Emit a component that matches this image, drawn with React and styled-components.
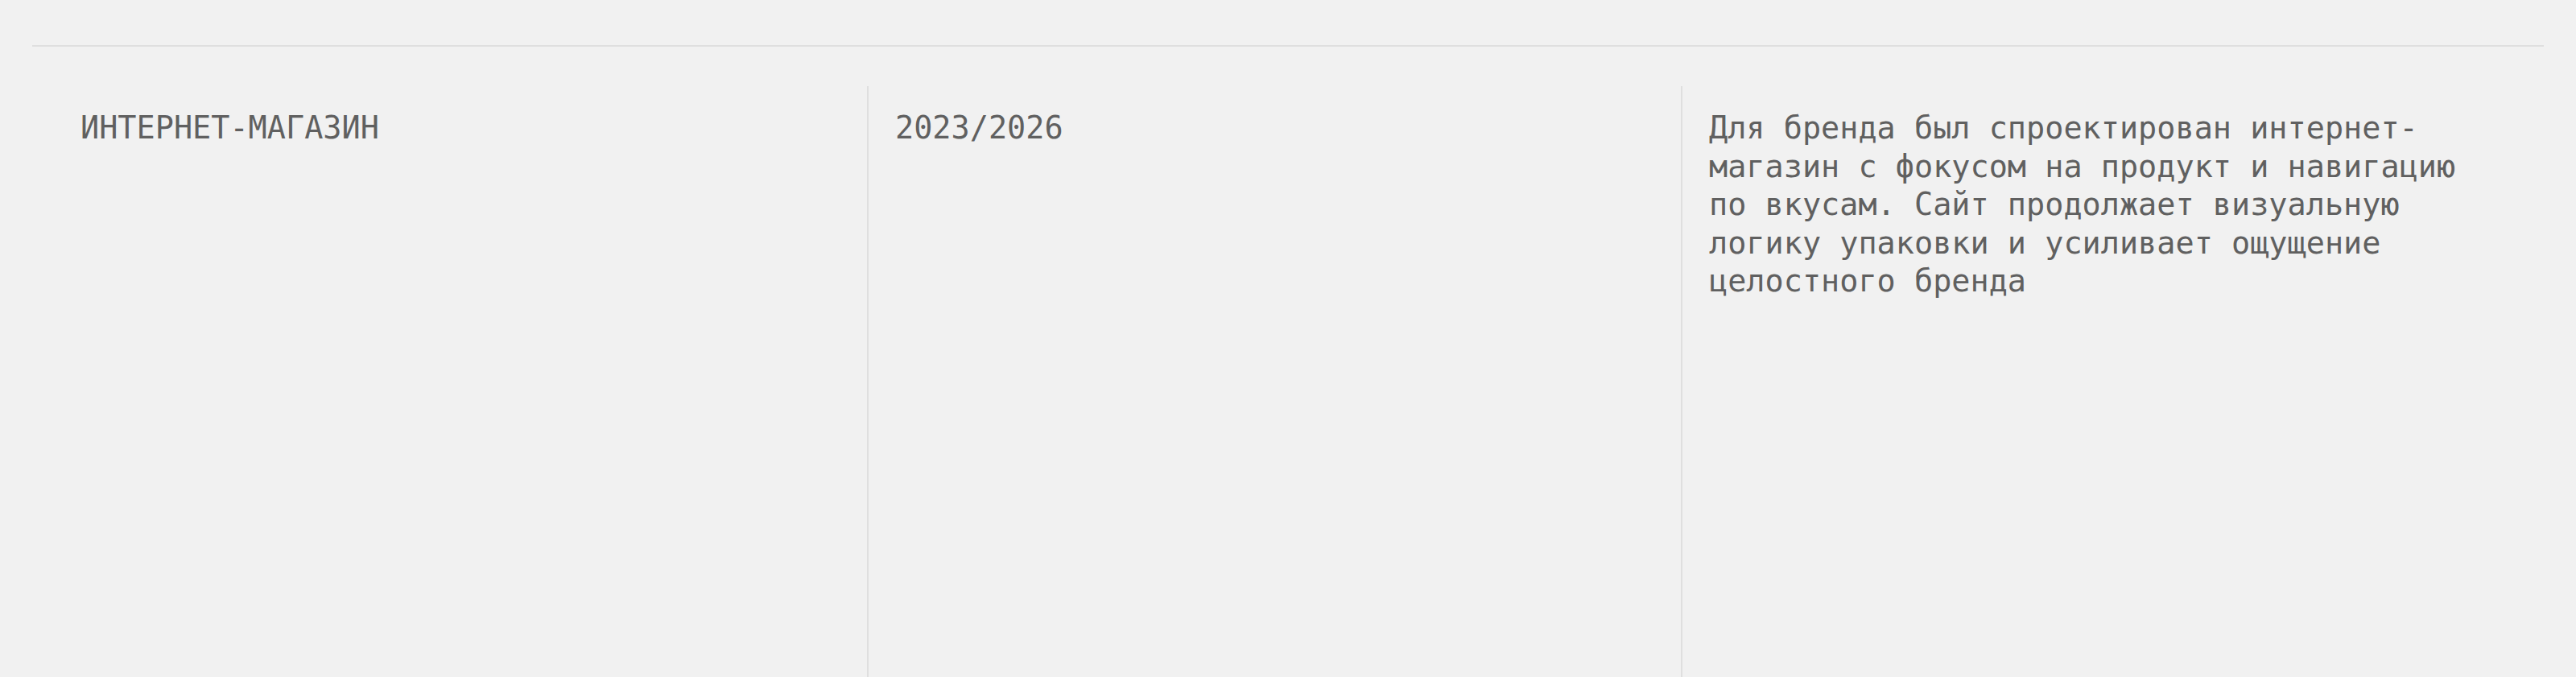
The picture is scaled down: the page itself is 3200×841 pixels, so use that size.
import styled, { createGlobalStyle } from 'styled-components';

const GlobalStyle = createGlobalStyle`
  html, body {
    margin: 0;
    padding: 0;
    background-color: #f1f1f1;
  }
`;

const Page = styled.main`
  min-height: 100vh;
  padding: 56px 40px 0 40px;
  box-sizing: border-box;
  display: flex;
  flex-direction: column;
  font-family: "DejaVu Sans Mono", "Liberation Mono", monospace;
  color: #606060;
`;

const Rule = styled.hr`
  margin: 0;
  border: none;
  border-top: 2px solid #dfdfdf;
`;

const Grid = styled.section`
  flex: 1;
  display: grid;
  grid-template-columns: 1037px 1011px 1fr;
  margin-top: 49px;
  min-height: 734px;
`;

const Column = styled.div`
  padding: 28px 0 0 ${({ $first }) => ($first ? '60px' : '33px')};
  border-left: ${({ $first }) => ($first ? 'none' : '2px solid #dfdfdf')};
`;

const Label = styled.h2`
  margin: 0;
  font-size: 38.5px;
  line-height: 47.5px;
  font-weight: 400;
  text-transform: uppercase;
`;

const Paragraph = styled.p`
  margin: 0;
  max-width: 960px;
  font-size: 38.5px;
  line-height: 47.6px;
  font-weight: 400;
`;

export default function App() {
  return (
    <>
      <GlobalStyle />
      <Page>
        <Rule />
        <Grid>
          <Column $first>
            <Label>Интернет-магазин</Label>
          </Column>
          <Column>
            <Label>2023/2026</Label>
          </Column>
          <Column>
            <Paragraph>
              Для бренда был спроектирован интернет-магазин с фокусом на продукт и навигацию
              по вкусам. Сайт продолжает визуальную логику упаковки и усиливает ощущение
              целостного бренда
            </Paragraph>
          </Column>
        </Grid>
      </Page>
    </>
  );
}
